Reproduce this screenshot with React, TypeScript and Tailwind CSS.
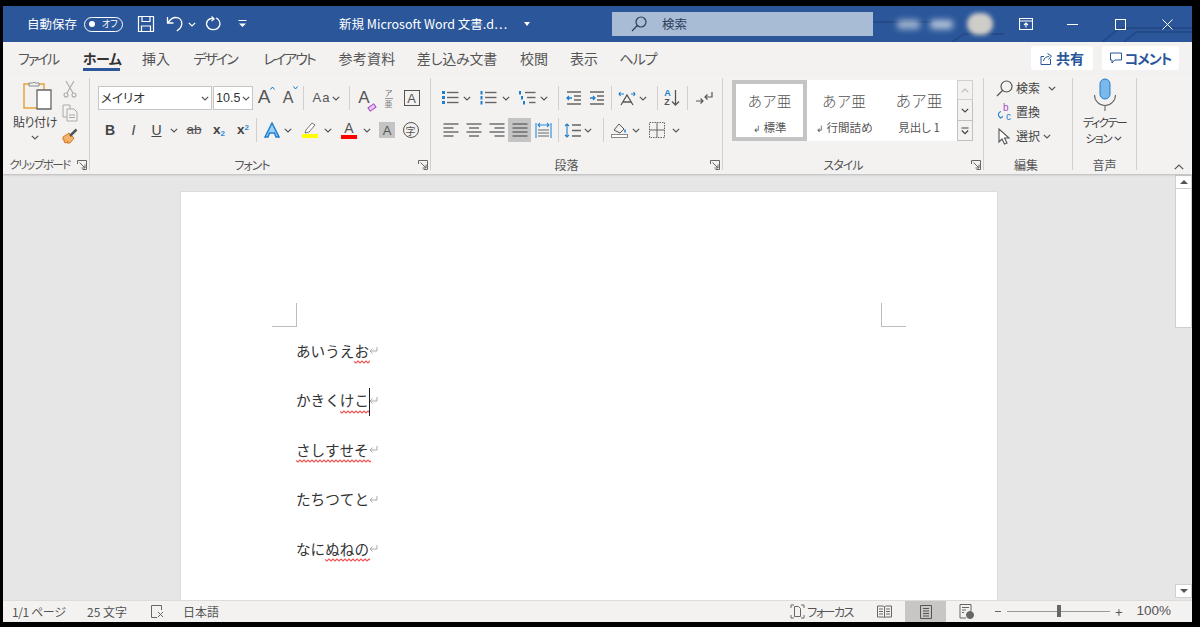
import type { ReactNode } from "react";

const FONT = { fontFamily: '"Noto Sans CJK JP", "Noto Sans", sans-serif' };

function Chev({ c = "#555", w = 12 }: { c?: string; w?: number }) {
  return (
    <div className="flex items-center justify-center shrink-0" style={{ width: w }}>
      <svg width="8" height="5" viewBox="0 0 8 5" fill="none" stroke={c} strokeWidth="1.2">
        <path d="M.8.8 4 4 7.2.8" />
      </svg>
    </div>
  );
}

function Cell({ w, children, cls = "" }: { w: number; children?: ReactNode; cls?: string }) {
  return (
    <div className={`flex items-center justify-center shrink-0 h-full ${cls}`} style={{ width: w }}>
      {children}
    </div>
  );
}

function Sep({ l, r, h = 24 }: { l: number; r: number; h?: number }) {
  return <div className="w-px bg-[#d2d0ce] shrink-0" style={{ marginLeft: l, marginRight: r, height: h }} />;
}

function Launcher() {
  return (
    <svg width="10" height="10" viewBox="0 0 10 10" fill="none" stroke="#666" strokeWidth="1">
      <path d="M.5 4V.5h9v9H5.5M2.500 2.500 8 8M8 4.500V8H4.500" />
    </svg>
  );
}

function Group({ w, label, launcher, labelCls = "", children }: { w: number; label: string; launcher?: boolean; labelCls?: string; children: ReactNode }) {
  return (
    <div className="flex shrink-0 h-full" style={{ width: w }}>
      <div className="flex flex-col flex-1 min-w-0">
        <div className="h-[78px] shrink-0">{children}</div>
        <div className="relative flex-1 flex items-center justify-center text-[12px] text-[#555]">
          <span className={`whitespace-nowrap ${labelCls}`}>{label}</span>
          {launcher && (
            <span className="absolute right-[2px] top-[4px]">
              <Launcher />
            </span>
          )}
        </div>
      </div>
      <div className="w-px bg-[#d2d0ce] h-[92px] shrink-0" />
    </div>
  );
}

function Lines({ kind }: { kind: "left" | "center" | "right" | "just" }) {
  const rows = [0, 1, 2, 3];
  const len = kind === "just" ? [15, 15, 15, 15] : [15, 10, 15, 10];
  return (
    <svg width="16" height="14" viewBox="0 0 16 14" stroke="#666" strokeWidth="1.4">
      {rows.map((i) => {
        const x = kind === "right" ? 15.5 - len[i] : kind === "center" ? (16 - len[i]) / 2 : 0.5;
        return <line key={i} x1={x} x2={x + len[i]} y1={1 + i * 4} y2={1 + i * 4} />;
      })}
    </svg>
  );
}

function TitleBar() {
  return (
    <div className="relative h-[36px] bg-[#2b579a] flex items-center text-white shrink-0 overflow-hidden">
      <svg className="absolute right-0 top-0" width="330" height="36" fill="none" stroke="#244b87" strokeWidth="2">
        <path d="M0 16H70M240 36l18-14h72M262 36l12-10h56M90 36l12-8h40" />
      </svg>
      <span className="relative ml-[24px] text-[12.5px] w-[50px] whitespace-nowrap [font-feature-settings:normal]">自動保存</span>
      <div className="relative ml-[7px] w-[39px] h-[15px] rounded-full border border-white flex items-center pl-[4px]">
        <div className="w-[6px] h-[6px] rounded-full bg-white" />
        <span className="ml-[7px] text-[9px]">オフ</span>
      </div>
      <div className="relative ml-[14px] w-[18px] flex">
        <svg width="18" height="18" viewBox="0 0 18 18" fill="none" stroke="#fff" strokeWidth="1.2">
          <path d="M1.5 1.5h15v15h-15zM5 1.5v5h8v-5M4.5 16.5v-5.5h9v5.500" />
        </svg>
      </div>
      <div className="relative ml-[11px] w-[18px]">
        <svg width="18" height="18" viewBox="0 0 18 18" fill="none" stroke="#fff" strokeWidth="1.3">
          <path d="M1.500 2v6h6M1.800 8c2.500-4 5-5.500 8-5.500 3.500 0 6 2.500 6 6 0 3-2 5.500-5 7.500" />
        </svg>
      </div>
      <div className="relative ml-[1px]"><Chev c="#fff" w={14} /></div>
      <div className="relative ml-[6px] w-[18px]">
        <svg width="18" height="18" viewBox="0 0 18 18" fill="none" stroke="#fff" strokeWidth="1.300">
          <path d="M6.500 1.500 9 4 6.500 6M8 3C4 3.500 1.500 6 1.500 9.500A7 7 0 0 0 15 9.500C15 6.500 13.500 4 11 3" />
        </svg>
      </div>
      <div className="relative ml-[13px] w-[12px] flex justify-center">
        <svg width="9" height="8" viewBox="0 0 9 8" fill="#fff" stroke="#fff">
          <path d="M.5.500h8" strokeWidth="1" fill="none" />
          <path d="M1 3.500h7L4.500 7z" stroke="none" />
        </svg>
      </div>
      <span className="relative ml-[91px] text-[12.500px] whitespace-nowrap w-[180px] [font-feature-settings:normal]">新規 Microsoft Word 文書.d…</span>
      <div className="relative ml-[5px] w-0 h-0 border-x-[3.500px] border-x-transparent border-t-[4px] border-t-white" />
      <div className="relative ml-[82px] w-[261px] h-[24px] bg-[#a9bcd6] flex items-center text-[#2b3f5c] text-[12.500px]">
        <div className="ml-[19px]">
          <svg width="16" height="16" viewBox="0 0 16 16" fill="none" stroke="#2b3f5c" strokeWidth="1.200">
            <circle cx="10" cy="6" r="5" />
            <path d="M6.300 9.500 1 15" />
          </svg>
        </div>
        <span className="ml-[15px]">検索</span>
      </div>
      <div className="relative ml-[24px] w-[23px] h-[9px] rounded bg-[#9fb3cf] blur-[3px]" />
      <div className="relative ml-[10px] w-[23px] h-[9px] rounded bg-[#b3c3da] blur-[3px]" />
      <div className="relative ml-[14px] w-[26px] h-[22px] rounded-full bg-[#cfcdc9] blur-[2px]" />
      <div className="relative ml-[26px] w-[14px]">
        <svg width="14" height="12" viewBox="0 0 14 12" fill="none" stroke="#fff" strokeWidth="1.100">
          <path d="M.5.500h13v11H.5zM.5 3h13" />
          <path d="M7 9.500V5M5 7l2-2 2 2" />
        </svg>
      </div>
      <div className="relative ml-[34px] w-[11px] h-px bg-white" />
      <div className="relative ml-[37px] w-[11px] h-[11px] border border-white" />
      <div className="relative ml-[36px] w-[11px]">
        <svg width="11" height="11" viewBox="0 0 11 11" stroke="#fff" strokeWidth="1">
          <path d="M.5.500l10 10M10.500.500l-10 10" />
        </svg>
      </div>
    </div>
  );
}

function TabRow() {
  const tabs: [string, number, number][] = [
    ["ファイル", 70, -2.2], ["ホーム", 58, -0.5], ["挿入", 50, 0], ["デザイン", 68, -2], ["レイアウト", 80, -2],
    ["参考資料", 76, 0.2], ["差し込み文書", 104, -0.2], ["校閲", 50, 0], ["表示", 50, 0], ["ヘルプ", 58, -1],
  ];
  return (
    <div className="h-[32px] flex items-center shrink-0 relative">
      {tabs.map(([t, w, track]) => (
        <div key={t} className="relative flex items-center justify-center h-full text-[14px] text-[#555] whitespace-nowrap" style={{ width: w, letterSpacing: track }}>
          <span className={t === "ホーム" ? "font-bold text-[#333]" : ""}>{t}</span>
          {t === "ホーム" && <div className="absolute left-[10px] right-[11px] bottom-[3px] h-[3px] bg-[#2b579a]" />}
        </div>
      ))}
      <div className="ml-auto mr-[13px] flex gap-[9px]">
        <div className="w-[62px] h-[24px] bg-white rounded-[2px] flex items-center justify-center gap-[3px] text-[14px] font-bold text-[#2b579a]">
          <svg width="13" height="13" viewBox="0 0 13 13" fill="none" stroke="#2b579a" strokeWidth="1">
            <path d="M4 4.500H1v8h9.500V7M3.500 9c.5-3 3-4.500 5.500-4.500M7.500 1.500 11.500 4 8.500 7.500" />
          </svg>
          共有
        </div>
        <div className="w-[77px] h-[24px] bg-white rounded-[2px] flex items-center justify-center gap-[3px] text-[14px] font-bold text-[#2b579a] tracking-[-1px]">
          <svg width="12" height="12" viewBox="0 0 12 12" fill="none" stroke="#2b579a" strokeWidth="1">
            <path d="M.5 1h11v7H4.500L2 11V8H.5z" />
          </svg>
          コメント
        </div>
      </div>
    </div>
  );
}

function Clipboard() {
  return (
    <Group w={87} label="クリップボード" launcher labelCls="tracking-[-1.5px] mr-[13px] text-[11.500px]">
      <div className="flex pt-[2px] h-full">
        <div className="ml-[8px] w-[48px] flex flex-col items-center">
          <svg className="ml-[6px]" width="30" height="32" viewBox="0 0 30 32" fill="none">
            <path d="M1 4h20v24H1z" fill="#f3f2f1" stroke="#e8a33d" strokeWidth="1.500" />
            <path d="M6 6V3h3.500a2 2 0 0 1 3 0H16v3z" fill="#f3f2f1" stroke="#888" />
            <path d="M14 10h14v19H14z" fill="#fff" stroke="#666" strokeWidth="1.300" />
          </svg>
          <span className="text-[12px] leading-[18px] mt-[1px] text-[#444] whitespace-nowrap tracking-[-0.4px]">貼り付け</span>
          <div className="mt-[4px]"><Chev /></div>
        </div>
        <div className="w-[22px] flex flex-col items-center gap-[6px]">
          <svg width="14" height="18" viewBox="0 0 14 18" fill="none" stroke="#aaa" strokeWidth="1.100">
            <path d="M3 1l7 12M11 1 4 13" />
            <circle cx="3" cy="15" r="2" />
            <circle cx="11" cy="15" r="2" />
          </svg>
          <svg width="17" height="18" viewBox="0 0 17 18" fill="none" stroke="#aaa" strokeWidth="1">
            <path d="M1 1h7v12H1z" />
            <path d="M5 5h7l3 3v9H5z" fill="#f3f2f1" />
            <path d="M7 11h6M7 13.500h6" />
          </svg>
          <svg width="17" height="16" viewBox="0 0 17 16" fill="none">
            <path d="M1 9 7 5l5 5-4 5H5l1-2-2 2-2-1 1-2-2 0z" fill="#f5b26b" stroke="#d9781f" />
            <path d="M8 8 14.500 1.500" stroke="#555" strokeWidth="2.500" />
          </svg>
        </div>
      </div>
    </Group>
  );
}

function A({ size = 15, c = "#555", bold = false }: { size?: number; c?: string; bold?: boolean }) {
  return <span className={bold ? "font-bold" : ""} style={{ fontSize: size, color: c, lineHeight: 1 }}>A</span>;
}

function FontGroup() {
  return (
    <Group w={341} label="フォント" launcher labelCls="tracking-[-1px] mr-[16px]">
      <div className="pl-[8px] pt-[8px]" style={{ fontFamily: '"Liberation Sans", "Noto Sans CJK JP", sans-serif' }}>
        <div className="flex items-center h-[24px]">
          <div className="w-[114px] h-[24px] bg-white border border-[#c8c6c4] flex items-center text-[12.500px] text-[#333] pl-[2px]" style={FONT}>
            <span className="flex-1">メイリオ</span>
            <Chev />
          </div>
          <div className="ml-px w-[40px] h-[24px] bg-white border border-[#c8c6c4] flex items-center text-[12.500px] text-[#333] pl-[2px]">
            <span className="w-[24px] overflow-hidden">10.5</span>
            <Chev />
          </div>
          <Cell w={24}>
            <span className="relative -ml-[2px]">
              <A size={19} />
              <svg className="absolute -right-[5px] top-0" width="5" height="4" viewBox="0 0 5 4" fill="none" stroke="#0078d4"><path d="M.5 3.500 2.500 1l2 2.500" /></svg>
            </span>
          </Cell>
          <Cell w={24}>
            <span className="relative -ml-[2px]">
              <A size={16} />
              <svg className="absolute -right-[5px] top-0" width="5" height="4" viewBox="0 0 5 4" fill="none" stroke="#0078d4"><path d="M.5.500l2 2.500 2-2.500" /></svg>
            </span>
          </Cell>
          <Sep l={2} r={4} />
          <Cell w={39}>
            <span className="text-[13px] text-[#555] tracking-[1px]">Aa</span>
            <Chev />
          </Cell>
          <Sep l={2} r={3} />
          <Cell w={24}>
            <span className="relative -ml-[2px]"><A size={17} /><span className="absolute -right-[6px] bottom-0 w-[8px] h-[5px] rotate-[-35deg] border border-[#a64ac9] bg-[#e8c9f2]" /></span>
          </Cell>
          <Cell w={23}>
            <div className="flex flex-col items-center text-[8px] text-[#777]" style={FONT}>
              <span className="h-[10px] leading-[10px]">ア</span>
              <span className="h-[10px] leading-[10px] border-t border-[#999]">亜</span>
            </div>
          </Cell>
          <Cell w={23}>
            <div className="w-[16px] h-[16px] border border-[#555] flex items-center justify-center"><A size={13} /></div>
          </Cell>
        </div>
        <div className="flex items-center h-[24px] mt-[8px]">
          <Cell w={24}><span className="text-[14px] font-bold text-[#444]">B</span></Cell>
          <Cell w={23}><span className="text-[14px] italic text-[#444]">I</span></Cell>
          <Cell w={23}><span className="text-[14px] underline text-[#444]">U</span></Cell>
          <Chev />
          <Cell w={24} cls="ml-[2px]"><span className="text-[13.500px] line-through text-[#555]">ab</span></Cell>
          <Cell w={24} cls="ml-px"><span className="text-[13.500px] font-bold text-[#444]">x<sub className="text-[8px] text-[#2b8ad6]">2</sub></span></Cell>
          <Cell w={24}><span className="text-[13.500px] font-bold text-[#444]">x<sup className="text-[8px] text-[#2b8ad6]">2</sup></span></Cell>
          <Sep l={1} r={4} />
          <Cell w={22}>
            <svg width="16" height="16" viewBox="0 0 16 16" fill="#9cd0f5" stroke="#1e7fd0" strokeWidth="1.500">
              <path d="M1 15 8 1l7 14h-3L10.500 11h-5L4 15z" />
            </svg>
          </Cell>
          <Chev w={10} />
          <Cell w={24} cls="ml-[5px]">
            <div className="flex flex-col items-center">
              <svg width="14" height="12" viewBox="0 0 14 12" fill="#fff" stroke="#777"><path d="M2 11l1-3 6-7 3 2-6 7z" /></svg>
              <div className="w-[16px] h-[4px] bg-[#ffff00]" />
            </div>
          </Cell>
          <Chev />
          <Cell w={24} cls="ml-[3px]">
            <div className="flex flex-col items-center leading-none">
              <span className="text-[14px] text-[#555] leading-[13px]">A</span>
              <div className="w-[16px] h-[4px] bg-[#ff0000]" />
            </div>
          </Cell>
          <Chev />
          <Cell w={24} cls="ml-[2px]">
            <div className="w-[16px] h-[16px] bg-[#c4c4c4] flex items-center justify-center"><A size={13} /></div>
          </Cell>
          <Cell w={23}>
            <div className="w-[16px] h-[16px] rounded-full border border-[#555] flex items-center justify-center text-[10px] text-[#555]" style={FONT}>字</div>
          </Cell>
        </div>
      </div>
    </Group>
  );
}

function ListIcon({ marks }: { marks: "dot" | "num" | "multi" }) {
  return (
    <svg width="17" height="14" viewBox="0 0 17 14">
      {[1, 6, 11].map((y, i) => (
        <g key={y}>
          {marks === "dot" && <rect x="0" y={y - 1} width="3" height="3" fill="#1e7fd0" />}
          {marks !== "dot" && <rect x={marks === "multi" ? i * 2 : 0.5} y={y - 1} width="2" height="3.500" fill="#1e7fd0" />}
          <line x1={marks === "multi" ? 6 + i * 2 : 5} x2="16.500" y1={y + 0.5} y2={y + 0.5} stroke="#666" strokeWidth="1.400" />
        </g>
      ))}
    </svg>
  );
}

function Indent({ flip }: { flip?: boolean }) {
  return (
    <svg width="16" height="14" viewBox="0 0 16 14" fill="none" strokeWidth="1.300">
      <path d="M1 1h14M8 5h7M8 9h7M1 13h14" stroke="#666" />
      <path d={flip ? "M1 7h5M4 5l2 2-2 2" : "M6 7H1M3 5 1 7l2 2"} stroke="#1e7fd0" />
    </svg>
  );
}

function Paragraph() {
  return (
    <Group w={292} label="段落" launcher labelCls="mr-[20px]">
      <div className="pl-[9px] pt-[8px]">
        <div className="flex items-center h-[24px]">
          <Cell w={20}><ListIcon marks="dot" /></Cell>
          <Chev w={14} />
          <Cell w={22} cls="ml-[3px]"><ListIcon marks="num" /></Cell>
          <Chev w={14} />
          <Cell w={24} cls="ml-[2px]"><ListIcon marks="multi" /></Cell>
          <Chev w={10} />
          <Sep l={9} r={3} />
          <Cell w={23}><Indent /></Cell>
          <Cell w={23}><Indent flip /></Cell>
          <Sep l={3} r={4} />
          <Cell w={22}>
            <svg width="18" height="15" viewBox="0 0 18 15" fill="none">
              <path d="M3 14 9 4l6 10M5 11h8" stroke="#555" strokeWidth="1.300" />
              <path d="M1 3h5M13 3h4M2.500 1 1 3l1.500 2M15.500 1 17 3l-1.500 2" stroke="#1e7fd0" strokeWidth="1.100" />
            </svg>
          </Cell>
          <Chev w={10} />
          <Sep l={9} r={2} />
          <Cell w={24}>
            <div className="flex items-center">
              <div className="flex flex-col text-[9px] leading-[9px] font-bold" style={{ fontFamily: '"Liberation Sans", sans-serif' }}>
                <span className="text-[#1e7fd0]">A</span>
                <span className="text-[#555]">Z</span>
              </div>
              <svg width="9" height="18" viewBox="0 0 9 18" fill="none" stroke="#555" strokeWidth="1.300"><path d="M4.500 1v15M1 12.500 4.500 16 8 12.500" /></svg>
            </div>
          </Cell>
          <Sep l={3} r={5} />
          <Cell w={22}>
            <svg width="18" height="14" viewBox="0 0 18 14" fill="none" stroke="#555" strokeWidth="1.200">
              <path d="M1 10h7M5.500 7.500 8 10l-2.500 2.500M17 1v5h-7M12.500 3.500 10 6l2.500 2.500" />
            </svg>
          </Cell>
        </div>
        <div className="flex items-center h-[24px] mt-[8px]">
          <Cell w={22}><Lines kind="left" /></Cell>
          <Cell w={23}><Lines kind="center" /></Cell>
          <Cell w={23}><Lines kind="right" /></Cell>
          <Cell w={23} cls="bg-[#c4c4c4]"><Lines kind="just" /></Cell>
          <Cell w={20} cls="ml-[2px]">
            <svg width="17" height="17" viewBox="0 0 17 17" fill="none">
              <path d="M1 1v15M16 1v15M3 3h11M5 1 3 3l2 2M12 1l2 2-2 2" stroke="#2b8ad6" strokeWidth="1.100" />
              <path d="M3 8h11M3 11h11M3 14h11" stroke="#666" />
            </svg>
          </Cell>
          <Sep l={5} r={4} />
          <Cell w={19}>
            <svg width="17" height="15" viewBox="0 0 17 15" fill="none">
              <path d="M3 1v13M1 3l2-2 2 2M1 12l2 2 2-2" stroke="#1e7fd0" strokeWidth="1.100" />
              <path d="M8 2h9M8 7.500h9M8 13h9" stroke="#666" strokeWidth="1.300" />
            </svg>
          </Cell>
          <Chev w={11} />
          <Sep l={10} r={5} />
          <Cell w={20}>
            <svg width="17" height="16" viewBox="0 0 17 16" fill="none">
              <path d="M3 8 8 2l5 5-4 4z" stroke="#555" />
              <path d="M14 7.500v3" stroke="#1e7fd0" strokeWidth="1.500" />
              <rect x=".5" y="12.500" width="16" height="3" fill="#fff" stroke="#888" />
            </svg>
          </Cell>
          <Chev w={14} />
          <Cell w={18} cls="ml-[5px]">
            <svg width="16" height="16" viewBox="0 0 16 16" fill="none" stroke="#666">
              <path d="M8 .5v15M.5 8h15" />
              <path d="M.5.500h15v15H.5z" strokeDasharray="1.500 1" />
            </svg>
          </Cell>
          <Chev w={20} />
        </div>
      </div>
    </Group>
  );
}

function Style({ t1, t2, w, size = 14.600, mark }: { t1: string; t2: string; w: number; size?: number; mark?: boolean }) {
  return (
    <div className="h-full flex flex-col items-center shrink-0" style={{ width: w }}>
      <span className="mt-[11px] text-[#555] leading-[20px] font-light [font-feature-settings:normal]" style={{ fontSize: size }}>{t1}</span>
      <span className="mt-[8px] text-[11.500px] text-[#555] leading-[16px] whitespace-nowrap">
        {mark && <span className="text-[9px] mr-[3px]">↲</span>}
        {t2}
      </span>
    </div>
  );
}

function Styles() {
  return (
    <Group w={261} label="スタイル" launcher labelCls="tracking-[-1px] mr-[20px]">
      <div className="pl-[9px] pt-[2px]">
        <div className="w-[241px] h-[61px] flex bg-white">
          <div className="w-[75px] h-full border-[4px] border-[#c4c4c4] shrink-0 flex flex-col items-center">
            <span className="mt-[7px] text-[14.600px] font-light text-[#555] leading-[20px] [font-feature-settings:normal]">あア亜</span>
            <span className="mt-[8px] text-[11.500px] text-[#555] leading-[16px]"><span className="text-[9px] mr-[3px]">↲</span>標準</span>
          </div>
          <Style t1="あア亜" t2="行間詰め" w={74} mark />
          <Style t1="あア亜" t2="見出し 1" w={76} size={15.700} />
          <div className="w-[16px] h-full flex flex-col shrink-0">
            <div className="h-[20px] bg-[#f3f2f1] border border-[#d2d0ce] flex items-center justify-center">
              <svg width="8" height="5" viewBox="0 0 8 5" fill="none" stroke="#bbb" strokeWidth="1.200"><path d="M.8 4.200 4 1l3.200 3.200" /></svg>
            </div>
            <div className="h-[20px] bg-[#f3f2f1] border-x border-[#c0c0c0] flex items-center justify-center">
              <svg width="8" height="5" viewBox="0 0 8 5" fill="none" stroke="#444" strokeWidth="1.200"><path d="M.8.800 4 4 7.200.800" /></svg>
            </div>
            <div className="h-[21px] bg-[#f3f2f1] border border-[#c0c0c0] flex items-center justify-center">
              <svg width="8" height="8" viewBox="0 0 8 8" fill="none" stroke="#444" strokeWidth="1.200"><path d="M.5 1h7M.8 3.500 4 6.700l3.200-3.200" /></svg>
            </div>
          </div>
        </div>
      </div>
    </Group>
  );
}

function Editing() {
  return (
    <Group w={89} label="編集" labelCls="mr-[4px]">
      <div className="pl-[12px] -mt-[2px] text-[12px] text-[#444]">
        <div className="flex items-center h-[24px]">
          <svg width="17" height="17" viewBox="0 0 17 17" fill="none" stroke="#555" strokeWidth="1.200">
            <circle cx="10.500" cy="6.500" r="5.500" />
            <path d="M6.500 10.500 1 16" />
          </svg>
          <span className="ml-[3px]">検索</span>
          <div className="ml-[6px]"><Chev /></div>
        </div>
        <div className="flex items-center h-[24px]">
          <svg width="17" height="18" viewBox="0 0 17 18" fill="none">
            <path d="M5 8.500C2 9 1.500 13 4 14.500M2.500 12.500 4.500 15 7 13.500" stroke="#1e7fd0" strokeWidth="1.100" />
            <text x="7" y="8" fontSize="10" fill="#a64ac9" style={{ fontFamily: '"Liberation Sans", sans-serif' }}>b</text>
            <text x="10" y="17" fontSize="10" fill="#1e7fd0" style={{ fontFamily: '"Liberation Sans", sans-serif' }}>c</text>
          </svg>
          <span className="ml-[3px]">置換</span>
        </div>
        <div className="flex items-center h-[24px]">
          <svg width="17" height="17" viewBox="0 0 17 17" fill="#fff" stroke="#555" strokeWidth="1.100">
            <path d="M3 1v13l3-3 2.500 5 2.500-1-2.500-5h4.500z" />
          </svg>
          <span className="ml-[3px]">選択</span>
          <Chev w={14} />
        </div>
      </div>
    </Group>
  );
}

function Voice() {
  return (
    <Group w={64} label="音声">
      <div className="flex flex-col items-center">
        <svg width="24" height="34" viewBox="0 0 24 34" fill="none">
          <rect x="7" y="1" width="10" height="20" rx="5" fill="#7cb8ea" stroke="#1e7fd0" />
          <path d="M1.500 17a10.500 10.500 0 0 0 21 0M12 27.500V33" stroke="#666" strokeWidth="1.100" />
        </svg>
        <span className="mt-[2px] text-[11.500px] leading-[16px] text-[#444] whitespace-nowrap tracking-[-1.500px]">ディクテー</span>
        <span className="text-[11.500px] leading-[16px] text-[#444] whitespace-nowrap flex items-center tracking-[-1px]">ション<Chev w={12} /></span>
      </div>
    </Group>
  );
}

function Ribbon() {
  return (
    <div className="relative h-[100px] flex pt-[4px] shrink-0 shadow-[0_1px_2px_rgba(0,0,0,0.2)] z-10">
      <Clipboard />
      <FontGroup />
      <Paragraph />
      <Styles />
      <Editing />
      <Voice />
      <svg className="absolute right-[8px] bottom-[4px]" width="10" height="6" viewBox="0 0 10 6" fill="none" stroke="#555" strokeWidth="1.200">
        <path d="M.8 5.200 5 1l4.200 4.200" />
      </svg>
    </div>
  );
}

function Para() {
  return (
    <svg width="9" height="9" viewBox="0 0 9 9" fill="none" stroke="#aaa" strokeWidth="1">
      <path d="M8 1v4H1M3.500 2.500 1 5l2.500 2.500" />
    </svg>
  );
}

function DocLine({ text, sq, sqW }: { text: string; sq?: number; sqW?: number }) {
  return (
    <div className="relative h-[49.500px] flex items-center whitespace-nowrap text-[14.600px] text-[#333] [font-feature-settings:normal]">
      <span>{text}</span>
      <Para />
      {sq !== undefined && sqW !== undefined && (
        <svg className="absolute top-[34px]" style={{ left: sq }} width={sqW} height="4" fill="none" stroke="#f25555" strokeWidth="1.200">
          <path d={`M0 1.500 ${Array.from({ length: Math.ceil(sqW / 2) }, (_, i) => `L${(i + 1) * 2} ${i % 2 ? 1 : 3}`).join(" ")}`} />
        </svg>
      )}
    </div>
  );
}

function Document() {
  return (
    <div className="flex-1 flex min-h-0 bg-[#e6e6e6]">
      <div className="ml-[177px] mt-[17px] w-[818px] bg-white border border-b-0 border-[#dcdcdc] shrink-0 relative overflow-hidden">
        <div className="flex justify-between ml-[91px] mr-[91px] mt-[111px]">
          <div className="w-[25px] h-[24px] border-r border-b border-[#bdbdbd]" />
          <div className="w-[25px] h-[24px] border-l border-b border-[#bdbdbd]" />
        </div>
        <div className="ml-[115px] -mt-[1px]">
          <DocLine text="あいうえお" sq={58} sqW={16} />
          <div className="relative">
            <DocLine text="かきくけこ" sq={44} sqW={29} />
            <div className="absolute left-[73px] top-[12px] w-px h-[28px] bg-[#222]" />
          </div>
          <DocLine text="さしすせそ" sq={0} sqW={75} />
          <DocLine text="たちつてと" />
          <DocLine text="なにぬねの" sq={29} sqW={45} />
        </div>
      </div>
      <div className="ml-[177px] w-[17px] flex flex-col mt-[1px] mb-[2px] shrink-0">
        <div className="h-[14px] bg-white border border-[#d0d0d0] flex items-center justify-center shrink-0">
          <div className="w-0 h-0 border-x-[4px] border-x-transparent border-b-[4px] border-b-[#555]" />
        </div>
        <div className="h-[139px] bg-white border-x border-b border-[#d0d0d0] shrink-0" />
        <div className="flex-1" />
        <div className="h-[14px] bg-white border border-[#d0d0d0] flex items-center justify-center shrink-0">
          <div className="w-0 h-0 border-x-[4px] border-x-transparent border-t-[4px] border-t-[#555]" />
        </div>
      </div>
    </div>
  );
}

function StatusBar() {
  return (
    <div className="h-[22px] bg-[#f3f2f1] flex items-center text-[12px] text-[#555] border-t border-[#dcdcdc] shrink-0">
      <span className="ml-[9px] w-[75px] whitespace-nowrap tracking-[-0.4px]">1/1 ページ</span>
      <span className="w-[63px] whitespace-nowrap">25 文字</span>
      <svg width="15" height="15" viewBox="0 0 15 15" fill="none" stroke="#666">
        <path d="M7 13.500H1.500v-12h10V6M8 8l5 5M13 8l-5 5" />
      </svg>
      <span className="ml-[18px] whitespace-nowrap">日本語</span>
      <div className="ml-auto flex items-center h-full">
        <svg width="15" height="15" viewBox="0 0 15 15" fill="none" stroke="#666">
          <path d="M1 4V1h3M11 1h3v3M14 11v3h-3M4 14H1v-3" />
          <path d="M4.500 2.500h4l2 2v8h-6z" />
        </svg>
        <span className="ml-[2px] w-[57px] whitespace-nowrap tracking-[-1.500px]">フォーカス</span>
        <Cell w={41}>
          <svg width="15" height="13" viewBox="0 0 15 13" fill="none" stroke="#666"><path d="M.5 1h6l1 1 1-1h6v11h-6l-1 1-1-1h-6zM7.500 2v10M2 4h4M2 6.500h4M2 9h4M9 4h4M9 6.500h4M9 9h4" /></svg>
        </Cell>
        <Cell w={41} cls="bg-[#c8c6c4]">
          <svg width="12" height="14" viewBox="0 0 12 14" fill="none" stroke="#555"><path d="M.5.500h11v13H.5zM3 3.500h6M3 6h6M3 8.500h6M3 11h6" /></svg>
        </Cell>
        <Cell w={41}>
          <svg width="15" height="15" viewBox="0 0 15 15" fill="none" stroke="#666">
            <path d="M1 .5h11v7M7 14H1V.5M3 3.500h7M3 6h4M3 8.500h2" />
            <circle cx="11" cy="11" r="3.500" fill="#666" />
          </svg>
        </Cell>
        <span className="ml-[8px] w-[6px] h-px bg-[#666]" />
        <div className="relative ml-[6px] w-[103px] h-px bg-[#999]">
          <div className="absolute left-[50px] -top-[6px] w-[4px] h-[12px] bg-[#666]" />
        </div>
        <span className="ml-[5px] text-[13px] leading-none">+</span>
        <span className="ml-[14px] mr-[21px] text-[13.500px] whitespace-nowrap" style={{ fontFamily: '"Liberation Sans", sans-serif' }}>100%</span>
      </div>
    </div>
  );
}

export default function App() {
  return (
    <div className="w-[1200px] h-[627px] bg-black pt-[6px] pl-[3px] overflow-hidden [font-feature-settings:'palt']" style={FONT}>
      <div className="w-[1189px] h-[616px] bg-[#f3f2f1] flex flex-col overflow-hidden">
        <TitleBar />
        <TabRow />
        <Ribbon />
        <Document />
        <StatusBar />
      </div>
    </div>
  );
}
